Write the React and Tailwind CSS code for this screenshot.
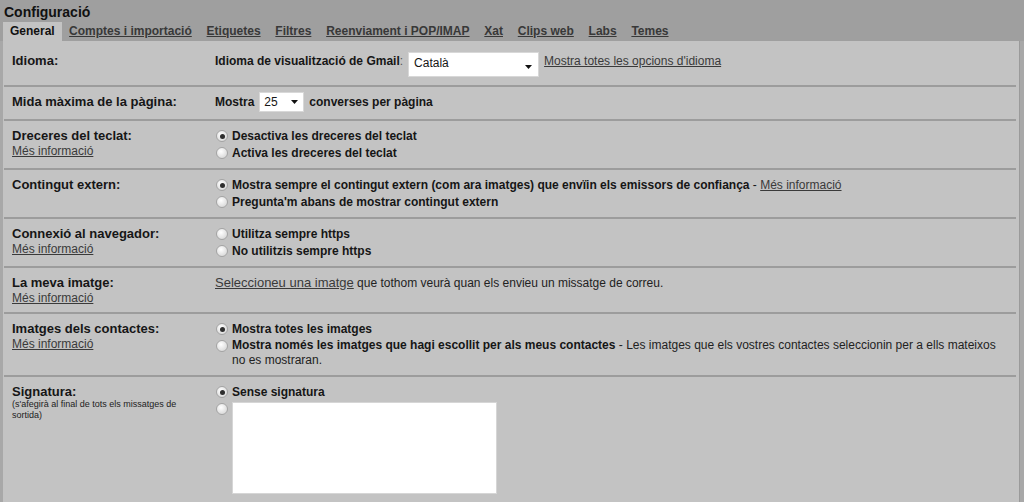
import React from "react";

function Radio({ checked }) {
  return (
    <span className="w-[17px] shrink-0 flex">
      <span className="mt-[2px] ml-[1px] w-[12px] h-[12px] rounded-full border border-[#a4a4a4] bg-[radial-gradient(circle_at_40%_35%,#ffffff,#cfcfcf)] flex items-center justify-center">
        {checked && <span className="w-[5px] h-[5px] rounded-full bg-[#2e2e2e]" />}
      </span>
    </span>
  );
}

function RadioItem({ checked, children, className = "" }) {
  return (
    <div className={"flex items-start " + className}>
      <Radio checked={checked} />
      <div className="flex-1">{children}</div>
    </div>
  );
}

function Arrow() {
  return (
    <svg width="7" height="4" viewBox="0 0 7 4" className="shrink-0">
      <polygon points="0,0 7,0 3.5,4" fill="#111" />
    </svg>
  );
}

function More() {
  return <div className="text-[12px] leading-[14px] underline text-[#3a3a3a]">Més informació</div>;
}

function Row({ label, sub, children, last, className = "pt-[7px] pb-[7px]" }) {
  return (
    <div className={"flex " + (last ? "" : "border-b-2 border-[#9c9c9c] ") + className}>
      <div className="w-[211px] shrink-0 pl-[8px]">
        <div className="text-[13px] font-bold leading-[16px] text-[#161616]">{label}</div>
        {sub}
      </div>
      <div className="flex-1 pr-[12px] text-[12px] leading-[16px] text-[#161616]">{children}</div>
    </div>
  );
}

const tabs = [
  "Comptes i importació",
  "Etiquetes",
  "Filtres",
  "Reenviament i POP/IMAP",
  "Xat",
  "Clips web",
  "Labs",
  "Temes",
];

export default function App() {
  return (
    <div className="w-[1024px] h-[502px] overflow-hidden bg-[#a8a8a8] font-['Liberation_Sans',Arial,sans-serif] text-[#111]">
      <div className="bg-[#9f9f9f] pt-[3px]">
        <div className="pl-[4px] text-[14px] font-bold leading-[18px] h-[19px] text-[#111]">Configuració</div>
        <div className="flex pl-[3px] h-[19px] text-[12px] font-bold leading-[19px]">
          <div className="px-[7px] bg-[#c3c3c3] text-[#111]">General</div>
          {tabs.map((t) => (
            <div key={t} className="px-[7.4px] underline text-[#383838]">
              {t}
            </div>
          ))}
        </div>
      </div>

      <div className="ml-[3px] w-[1017px] h-[470px] bg-[#c3c3c3] pl-[1px] pr-[3px] border-r border-[#9a9a9a]">
        <Row label={<span className="block mt-[1px]">Idioma:</span>} className="pt-[11px] pb-[8px]">
          <div className="flex items-start">
            <span className="mt-[1px] font-bold">Idioma de visualització de Gmail</span>
            <span className="mt-[1px] text-[#555]">:</span>
            <div className="ml-[5px] w-[131px] h-[25px] bg-white border border-[#d8d8d8] flex items-start justify-between pl-[5px] pr-[6px] pt-[2px]">
              <span className="leading-[16px]">Català</span>
              <span className="mt-[10px]"><Arrow /></span>
            </div>
            <span className="ml-[5px] mt-[1px] underline text-[#3a3a3a]">Mostra totes les opcions d'idioma</span>
          </div>
        </Row>

        <Row label={<span className="block mt-[2px]">Mida màxima de la pàgina:</span>} className="pt-[5px] pb-[7px]">
          <div className="flex items-start">
            <span className="mt-[2px] font-bold">Mostra</span>
            <div className="ml-[5px] w-[45px] h-[20px] bg-white border border-[#d8d8d8] flex items-center justify-between pl-[4px] pr-[5px]">
              <span className="leading-[16px]">25</span>
              <Arrow />
            </div>
            <span className="ml-[5px] mt-[2px] font-bold">converses per pàgina</span>
          </div>
        </Row>

        <Row label="Dreceres del teclat:" sub={<More />}>
          <RadioItem checked><span className="font-bold">Desactiva les dreceres del teclat</span></RadioItem>
          <RadioItem className="mt-[1px]"><span className="font-bold">Activa les dreceres del teclat</span></RadioItem>
        </Row>

        <Row label="Contingut extern:">
          <RadioItem checked>
            <span className="font-bold">Mostra sempre el contingut extern (com ara imatges) que envïin els emissors de confiança</span>
            <span> - </span>
            <span className="underline text-[#3a3a3a]">Més informació</span>
          </RadioItem>
          <RadioItem className="mt-[1px]"><span className="font-bold">Pregunta'm abans de mostrar contingut extern</span></RadioItem>
        </Row>

        <Row label="Connexió al navegador:" sub={<More />}>
          <RadioItem><span className="font-bold">Utilitza sempre https</span></RadioItem>
          <RadioItem className="mt-[1px]"><span className="font-bold">No utilitzis sempre https</span></RadioItem>
        </Row>

        <Row label="La meva imatge:" sub={<More />}>
          <div>
            <span className="text-[13px] underline text-[#3a3a3a]">Seleccioneu una imatge</span>
            <span className="text-[#222]"> que tothom veurà quan els envieu un missatge de correu.</span>
          </div>
        </Row>

        <Row label="Imatges dels contactes:" sub={<More />}>
          <RadioItem checked><span className="font-bold">Mostra totes les imatges</span></RadioItem>
          <RadioItem className="mt-[1px] leading-[15px]">
            <span className="font-bold">Mostra només les imatges que hagi escollit per als meus contactes</span>
            <span className="text-[#222]"> - Les imatges que els vostres contactes seleccionin per a ells mateixos no es mostraran.</span>
          </RadioItem>
        </Row>

        <Row
          label="Signatura:"
          last
          sub={
            <div className="-mt-[1px] w-[175px] text-[9px] leading-[11px] text-[#222]">
              (s'afegirà al final de tots els missatges de sortida)
            </div>
          }
        >
          <RadioItem checked><span className="font-bold">Sense signatura</span></RadioItem>
          <div className="flex items-start mt-[2px]">
            <span className="mt-[-1px]"><Radio /></span>
            <div className="w-[265px] h-[92px] bg-white border border-[#d6d6d6]" />
          </div>
        </Row>
      </div>
    </div>
  );
}
